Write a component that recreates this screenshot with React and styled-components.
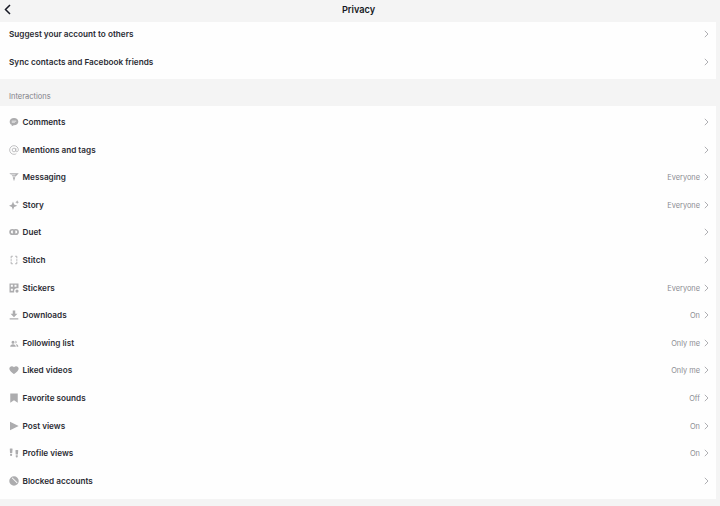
import React from "react";
import styled, { createGlobalStyle } from "styled-components";

const Global = createGlobalStyle`
  html, body { margin: 0; padding: 0; background: #f4f4f4; }
  body { font-family: "Inter", "Liberation Sans", sans-serif; overflow: hidden; }
`;
const Page = styled.div`
  width: 720px; height: 506px; display: flex; flex-direction: column; background: #f4f4f4; overflow: hidden; opacity: .995;
`;
const Header = styled.header`
  height: 22px; flex: none; display: flex; align-items: center; justify-content: center; position: relative;
`;
const Back = styled.svg`
  position: absolute; left: 3px; top: 3px; width: 10px; height: 13px;
`;
const Title = styled.h1`
  margin: 0 3px 3px 0; font-size: 9.2px; font-weight: 600; color: #161823;
`;
const Card = styled.section`
  background: #fff; margin-right: 4px; padding: ${p => p.$pad}; display: flex; flex-direction: column; gap: ${p => p.$gap};
`;
const SectionLabel = styled.div`
  height: 27px; flex: none; box-sizing: border-box; padding: 13px 0 0 9px; font-size: 7.5px; line-height: 10px; color: #7f8087;
`;
const Row = styled.div`
  height: ${p => p.$h}; flex: none; display: flex; align-items: center; padding: 0 7px 0 8.5px;
`;
const PlainRow = styled(Row)`
  padding-left: 9px;
`;
const IconSlot = styled.span`
  width: 10px; height: 10px; flex: none; margin-right: 4px; display: flex; color: #acacae;
  svg { width: 10px; height: 10px; display: block; }
`;
const Label = styled.span`
  flex: 1; font-size: 8.2px; font-weight: 600; color: #2a2b33;
`;
const Value = styled.span`
  font-size: 7.4px; color: #8a8b91; margin: 1px 4px 0 0;
`;
const Chevron = styled.svg`
  width: 5px; height: 8px; flex: none; color: #9a9b9f;
`;

const paths = {
  comments: <path fill="currentColor" fillRule="evenodd" d="M6 1.200C2.900 1.200 .8 3.200 .8 5.600c0 1.700 1 3.100 2.500 3.800v1.600l2.400-1.100H6c3.100 0 5.200-2 5.200-4.300S9.100 1.200 6 1.200zM3.300 4.600h5.400v.8H3.300zm0 1.900h3.800v.8H3.300z" />,
  mentions: <g fill="none" stroke="currentColor" strokeWidth=".9"><circle cx="6" cy="6" r="2.200" /><path d="M8.200 3.800v3.100c0 1.700 3 1.700 3-1C11.200 3 8.900.8 6 .8S.8 3.100.8 6 3.100 11.200 6 11.200c1.100 0 2-.2 2.800-.8" /></g>,
  messaging: <path fill="currentColor" d="M.3 1.600h11.400L8 5.400H4.400L3.200 3.800h4.100l.8-.8H2.300zM4.500 6.400h3L6 11z" />,
  story: <path fill="currentColor" d="M4.800 1.800l1.400 3.700 3.800 1.400-3.800 1.400-1.400 3.700-1.400-3.700L-.4 6.900l3.800-1.400zM9.800.3l.7 1.600 1.600.7-1.600.7-.7 1.600-.7-1.600-1.600-.7 1.600-.7z" />,
  duet: <g fill="none" stroke="currentColor" strokeWidth="2"><circle cx="4" cy="6" r="2.700" /><circle cx="8.200" cy="6" r="2.700" /></g>,
  stitch: <path fill="none" stroke="currentColor" strokeWidth="1.100" d="M4.600 1.500H2.600v2.500M7.400 1.500h2v2.500M4.600 10.500H2.600V8M7.400 10.500h2V8M2.600 5v2M9.400 5v2" />,
  stickers: <path fill="currentColor" fillRule="evenodd" d="M.6.6h10.800v5.600H9.600a3.400 3.400 0 0 0-3.400 3.400v1.800H.6zM2.200 2.200v2.400h2.400V2.200zm4.400 0v2.400H9V2.200zM2.200 6.800v2.400h2.400V6.800zm7.400 1a1.900 1.900 0 1 1-.01 3.800 1.900 1.900 0 0 1 .01-3.800z" />,
  downloads: <path fill="currentColor" d="M4.500.6h3v3.900h2.600L6 8.600 1.900 4.500h2.600zM.8 9.900h10.400v1.400H.8z" />,
  following: <path fill="currentColor" d="M4.800 3.200a1.800 1.800 0 1 1 0 3.600 1.800 1.800 0 0 1 0-3.600zM1.400 10.400c0-1.700 1.500-2.900 3.400-2.900s3.400 1.200 3.400 2.900zM8 3.400a1.600 1.600 0 0 1 0 3.100c-.4 0-.5-.3-.3-.8.200-.5.200-1 0-1.500-.2-.5-.1-.8.300-.8zM8.800 7.500c1.400.1 2.400 1.200 2.400 2.900H9.200c0-1.100-.3-2.100-1-2.800z" />,
  liked: <path fill="currentColor" d="M6 10.900S.4 7.800.4 4.300C.4 2.600 1.700 1.400 3.400 1.400c1.100 0 2 .5 2.600 1.400.6-.9 1.500-1.400 2.600-1.400 1.700 0 3 1.200 3 2.900C11.600 7.800 6 10.900 6 10.900z" />,
  sounds: <path fill="currentColor" d="M1.500.7h9v11L6 8.700l-4.500 3z" />,
  post: <path fill="currentColor" d="M1.200.8 11.600 6 1.200 11.200z" />,
  profile: <path fill="currentColor" d="M.9.9c1.200-.5 2.700-.3 3.400 0l-.4 5H1.200zM1.300 6.800h2.400v1.900c0 1.200-2.400 1.200-2.400 0zM7.700 2.800c.7-.3 2.200-.5 3.400 0l-.4 5H8zM8.100 8.700h2.400v1.700c0 1.200-2.400 1.200-2.400 0z" />,
  blocked: <path fill="currentColor" fillRule="evenodd" d="M6 .3a5.700 5.700 0 1 1 0 11.400A5.700 5.700 0 0 1 6 .3zM3.300 2.500 9.500 8.700l.7-.9L4.100 1.800z" />,
};

const top = ["Suggest your account to others", "Sync contacts and Facebook friends"];
const items = [
  ["comments", "Comments"],
  ["mentions", "Mentions and tags"],
  ["messaging", "Messaging", "Everyone"],
  ["story", "Story", "Everyone"],
  ["duet", "Duet"],
  ["stitch", "Stitch"],
  ["stickers", "Stickers", "Everyone"],
  ["downloads", "Downloads", "On"],
  ["following", "Following list", "Only me"],
  ["liked", "Liked videos", "Only me"],
  ["sounds", "Favorite sounds", "Off"],
  ["post", "Post views", "On"],
  ["profile", "Profile views", "On"],
  ["blocked", "Blocked accounts"],
];

const Arrow = () => (
  <Chevron viewBox="0 0 5 8"><path d="M.8.8 4 4 .8 7.200" fill="none" stroke="currentColor" strokeWidth=".8" /></Chevron>
);

export default function App() {
  return (
    <Page>
      <Global />
      <Header>
        <Back viewBox="0 0 10 13"><path d="M7 2 2.500 6.500 7 11" fill="none" stroke="#161823" strokeWidth="1.500" /></Back>
        <Title>Privacy</Title>
      </Header>
      <Card $pad="0 0 5.300px" $gap="3.700px">
        {top.map(t => <PlainRow key={t} $h="24px"><Label>{t}</Label><Arrow /></PlainRow>)}
      </Card>
      <SectionLabel>Interactions</SectionLabel>
      <Card $pad="2.300px 0 4px" $gap="0">
        {items.map(([k, t, v]) => (
          <Row key={k} $h="27.6px">
            <IconSlot><svg viewBox="0 0 12 12">{paths[k]}</svg></IconSlot>
            <Label>{t}</Label>
            {v && <Value>{v}</Value>}
            <Arrow />
          </Row>
        ))}
      </Card>
    </Page>
  );
}
